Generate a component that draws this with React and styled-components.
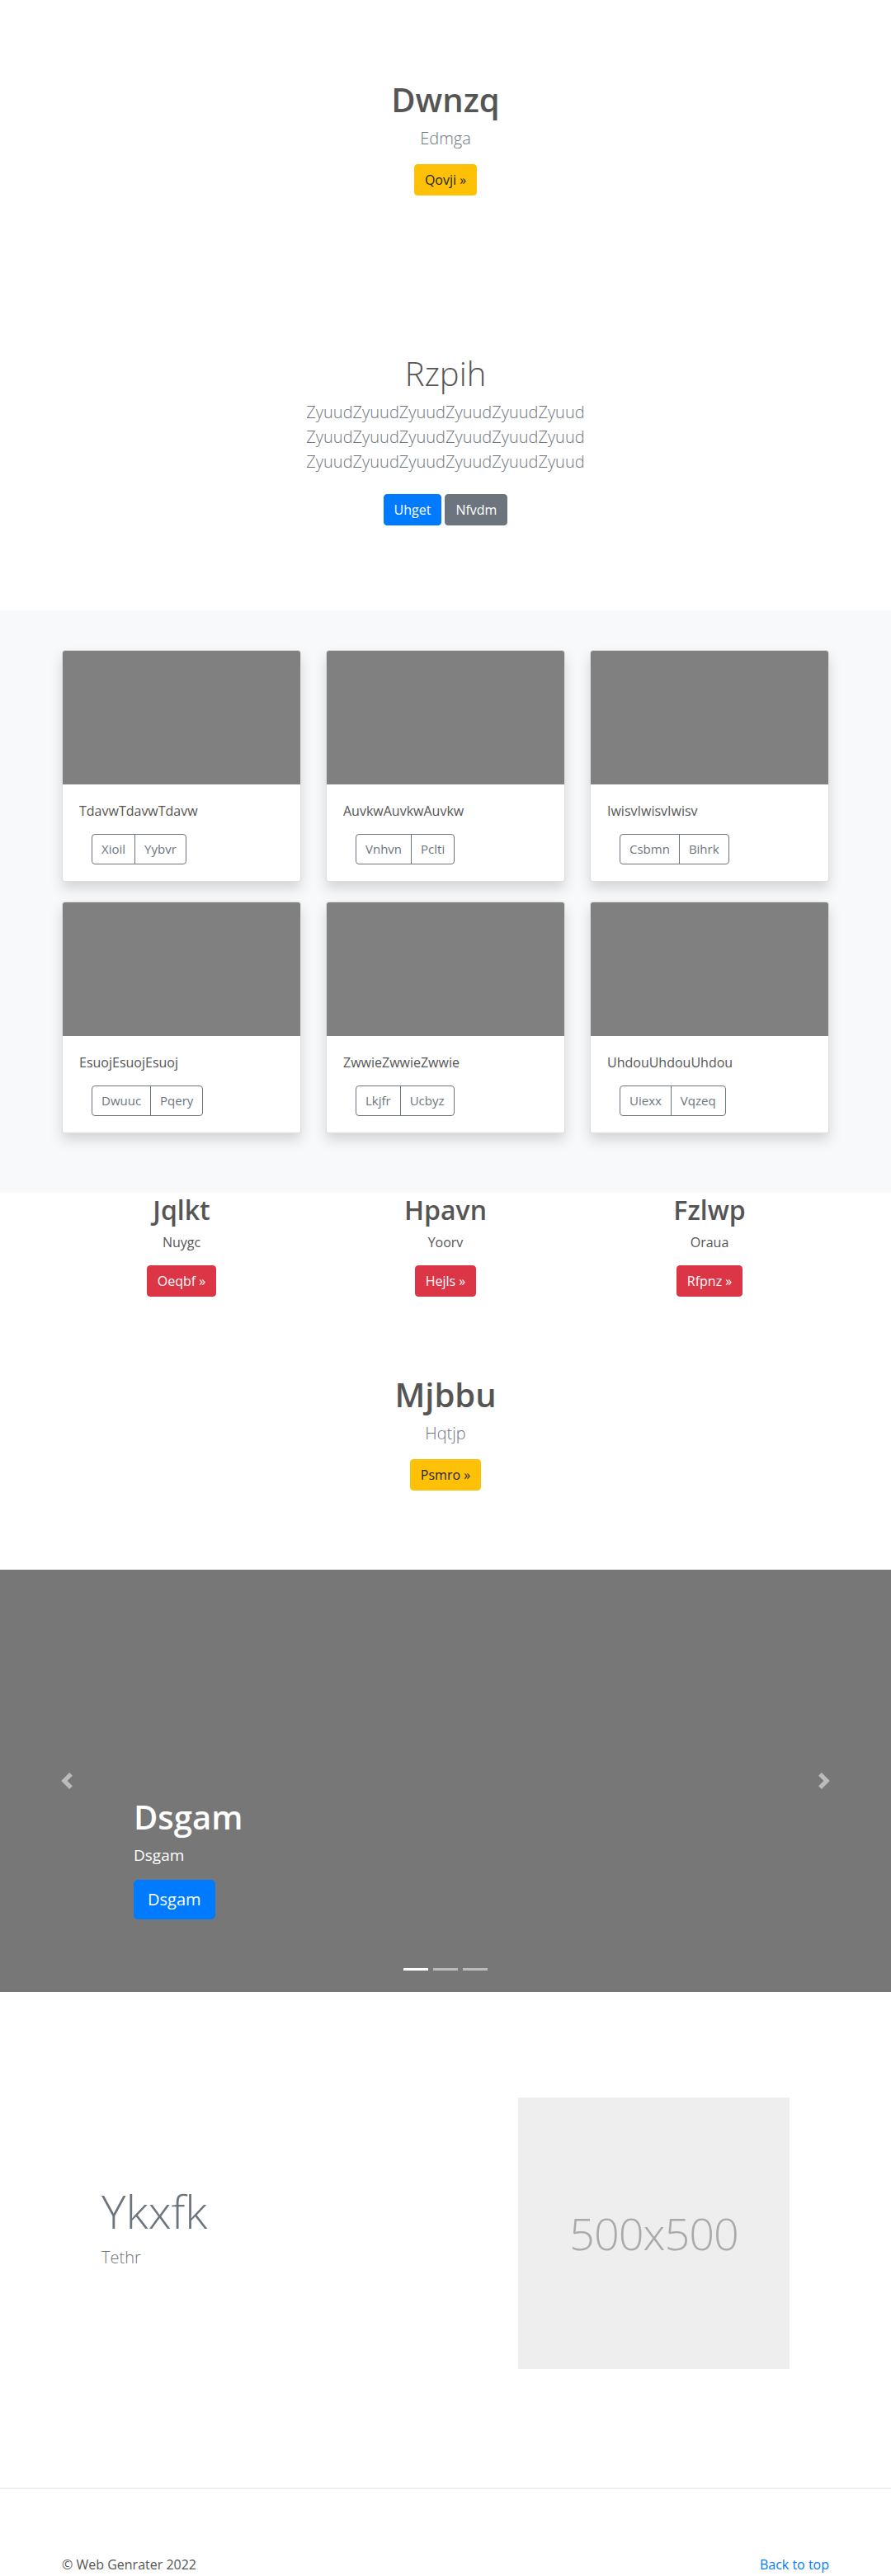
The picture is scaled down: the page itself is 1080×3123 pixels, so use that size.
import React from "react";
import styled, { createGlobalStyle } from "styled-components";

const GlobalStyle = createGlobalStyle`
  * { box-sizing: border-box; }
  body {
    margin: 0;
    font-family: "Segoe UI", "Open Sans", "Noto Sans", Arial, sans-serif;
    font-size: 16px;
    line-height: 1.5;
    color: #555;
    background: #fff;
  }
`;

const cards = [
  { text: "TdavwTdavwTdavw", buttons: ["Xioil", "Yybvr"] },
  { text: "AuvkwAuvkwAuvkw", buttons: ["Vnhvn", "Pclti"] },
  { text: "IwisvIwisvIwisv", buttons: ["Csbmn", "Bihrk"] },
  { text: "EsuojEsuojEsuoj", buttons: ["Dwuuc", "Pqery"] },
  { text: "ZwwieZwwieZwwie", buttons: ["Lkjfr", "Ucbyz"] },
  { text: "UhdouUhdouUhdou", buttons: ["Uiexx", "Vqzeq"] },
];

const columns = [
  { title: "Jqlkt", text: "Nuygc", button: "Oeqbf" },
  { title: "Hpavn", text: "Yoorv", button: "Hejls" },
  { title: "Fzlwp", text: "Oraua", button: "Rfpnz" },
];

const variants = {
  warning: { bg: "#ffc107", fg: "#212529" },
  primary: { bg: "#007bff", fg: "#fff" },
  secondary: { bg: "#6c757d", fg: "#fff" },
  danger: { bg: "#dc3545", fg: "#fff" },
};

export default function App() {
  return (
    <>
      <GlobalStyle />
      <Hero $top={97} $bottom={0}>
        <Title>Dwnzq</Title>
        <Lead>Edmga</Lead>
        <ButtonRow>
          <Btn $variant="warning">Qovji &raquo;</Btn>
        </ButtonRow>
      </Hero>

      <Hero $top={192} $bottom={103}>
        <Title $light>Rzpih</Title>
        <Lead $narrow $gap={24}>
          ZyuudZyuudZyuudZyuudZyuudZyuud ZyuudZyuudZyuudZyuudZyuudZyuud
          ZyuudZyuudZyuudZyuudZyuudZyuud
        </Lead>
        <ButtonRow>
          <Btn $variant="primary">Uhget</Btn>
          <Btn $variant="secondary">Nfvdm</Btn>
        </ButtonRow>
      </Hero>

      <Album>
        <Container>
          <CardGrid>
            {cards.map((card, index) => (
              <Card key={index}>
                <Thumb />
                <CardBody>
                  <CardText>{card.text}</CardText>
                  <BtnGroup>
                    {card.buttons.map((label) => (
                      <GroupBtn key={label}>{label}</GroupBtn>
                    ))}
                  </BtnGroup>
                </CardBody>
              </Card>
            ))}
          </CardGrid>
        </Container>
      </Album>

      <Marketing>
        <Container>
          <ColumnGrid>
            {columns.map((col) => (
              <Column key={col.title}>
                <ColumnTitle>{col.title}</ColumnTitle>
                <ColumnText>{col.text}</ColumnText>
                <Btn $variant="danger">{col.button} &raquo;</Btn>
              </Column>
            ))}
          </ColumnGrid>
        </Container>
      </Marketing>

      <Hero $top={95} $bottom={96}>
        <Title>Mjbbu</Title>
        <Lead>Hqtjp</Lead>
        <ButtonRow>
          <Btn $variant="warning">Psmro &raquo;</Btn>
        </ButtonRow>
      </Hero>

      <Carousel>
        <Control $side="left">
          <svg width="20" height="20" viewBox="0 0 8 8">
            <path fill="#fff" d="M5.25 0l-4 4 4 4 1.5-1.5L4.25 4l2.5-2.5L5.25 0z" />
          </svg>
        </Control>
        <Control $side="right">
          <svg width="20" height="20" viewBox="0 0 8 8">
            <path fill="#fff" d="M2.75 0l-1.5 1.5L3.75 4l-2.5 2.5L2.75 8l4-4-4-4z" />
          </svg>
        </Control>
        <Caption>
          <CaptionTitle>Dsgam</CaptionTitle>
          <CaptionText>Dsgam</CaptionText>
          <Btn $variant="primary" $large>Dsgam</Btn>
        </Caption>
        <Indicators>
          <Indicator $active />
          <Indicator />
          <Indicator />
        </Indicators>
      </Carousel>

      <Featurette>
        <Container>
          <FeatureRow>
            <div>
              <FeatureTitle>Ykxfk</FeatureTitle>
              <FeatureLead>Tethr</FeatureLead>
            </div>
            <Placeholder>500x500</Placeholder>
          </FeatureRow>
        </Container>
      </Featurette>

      <Divider />

      <Footer>
        <Container>
          <FooterRow>
            <span>&copy; Web Genrater 2022</span>
            <FooterLink href="#">Back to top</FooterLink>
          </FooterRow>
        </Container>
      </Footer>
    </>
  );
}

const Container = styled.div`
  width: 960px;
  max-width: 100%;
  margin: 0 auto;
  padding: 0 15px;
`;

const Hero = styled.section`
  text-align: center;
  padding: ${(p) => p.$top}px 15px ${(p) => p.$bottom}px;
`;

const Title = styled.h1`
  margin: 0 0 8px;
  font-size: 40px;
  line-height: 48px;
  font-weight: ${(p) => (p.$light ? 300 : 600)};
  color: #555;
`;

const Lead = styled.p`
  margin: 0 auto ${(p) => p.$gap ?? 16}px;
  max-width: ${(p) => (p.$narrow ? "450px" : "none")};
  font-size: 20px;
  line-height: 30px;
  font-weight: 300;
  color: #6c757d;
`;

const ButtonRow = styled.div`
  display: flex;
  justify-content: center;
  gap: 4px;
`;

const Btn = styled.a`
  display: inline-block;
  padding: ${(p) => (p.$large ? "8px 16px" : "6px 12px")};
  font-size: ${(p) => (p.$large ? "20px" : "16px")};
  line-height: ${(p) => (p.$large ? "30px" : "24px")};
  border-radius: ${(p) => (p.$large ? "5px" : "4px")};
  border: 1px solid ${(p) => variants[p.$variant].bg};
  background: ${(p) => variants[p.$variant].bg};
  color: ${(p) => variants[p.$variant].fg};
  text-decoration: none;
  cursor: pointer;
`;

const Album = styled.section`
  background: #f8f9fa;
  padding: 48px 0 72px;
`;

const CardGrid = styled.div`
  display: grid;
  grid-template-columns: repeat(3, 1fr);
  column-gap: 30px;
  row-gap: 24px;
`;

const Card = styled.div`
  background: #fff;
  border: 1px solid rgba(0, 0, 0, 0.125);
  border-radius: 4px;
  overflow: hidden;
  box-shadow: 0 8px 16px rgba(0, 0, 0, 0.15);
`;

const Thumb = styled.div`
  aspect-ratio: 16 / 9;
  background: #808080;
`;

const CardBody = styled.div`
  padding: 20px;
`;

const CardText = styled.p`
  margin: 0 0 16px;
  font-size: 16px;
  line-height: 24px;
  color: #555;
`;

const BtnGroup = styled.div`
  display: inline-flex;
  margin-left: 15px;
`;

const GroupBtn = styled.button`
  font-family: inherit;
  font-size: 15px;
  line-height: 21px;
  padding: 7px 11px;
  color: #6c757d;
  background: transparent;
  border: 1px solid #6c757d;
  border-radius: 0;
  cursor: pointer;
  &:first-child {
    border-radius: 4px 0 0 4px;
  }
  &:last-child {
    border-radius: 0 4px 4px 0;
  }
  & + & {
    margin-left: -1px;
  }
`;

const Marketing = styled.section`
  padding-top: 2px;
`;

const ColumnGrid = styled.div`
  display: grid;
  grid-template-columns: repeat(3, 1fr);
  column-gap: 30px;
`;

const Column = styled.div`
  text-align: center;
`;

const ColumnTitle = styled.h2`
  margin: 0 0 8px;
  font-size: 32px;
  line-height: 38px;
  font-weight: 600;
  color: #555;
`;

const ColumnText = styled.p`
  margin: 0 0 16px;
  color: #555;
`;

const Carousel = styled.section`
  position: relative;
  height: 512px;
  background: #777;
  margin-bottom: 64px;
`;

const Control = styled.a`
  position: absolute;
  top: 0;
  bottom: 0;
  ${(p) => p.$side}: 0;
  width: 15%;
  display: flex;
  align-items: center;
  justify-content: center;
  opacity: 0.5;
`;

const Caption = styled.div`
  position: absolute;
  left: 15%;
  right: 15%;
  bottom: 52px;
  padding: 20px 0 36px;
  color: #fff;
  text-align: left;
`;

const CaptionTitle = styled.h1`
  margin: 0 0 8px;
  font-size: 40px;
  line-height: 48px;
  font-weight: 600;
`;

const CaptionText = styled.p`
  margin: 0 0 16px;
  font-size: 19px;
  line-height: 28px;
`;

const Indicators = styled.div`
  position: absolute;
  left: 0;
  right: 0;
  bottom: 26px;
  display: flex;
  justify-content: center;
  gap: 6px;
`;

const Indicator = styled.span`
  width: 30px;
  height: 3px;
  background: #fff;
  opacity: ${(p) => (p.$active ? 1 : 0.5)};
`;

const Featurette = styled.section`
  padding-top: 64px;
`;

const FeatureRow = styled.div`
  display: grid;
  grid-template-columns: 1fr 1fr;
  align-items: center;
  padding: 0 48px;
`;

const FeatureTitle = styled.h2`
  margin: 0 0 8px;
  font-size: 56px;
  line-height: 67px;
  font-weight: 300;
  color: #6c757d;
`;

const FeatureLead = styled.p`
  margin: 0 0 16px;
  font-size: 20px;
  line-height: 30px;
  font-weight: 300;
  color: #6c757d;
`;

const Placeholder = styled.div`
  justify-self: end;
  width: 329px;
  height: 329px;
  background: #eee;
  color: #aaa;
  display: flex;
  align-items: center;
  justify-content: center;
  font-size: 54px;
  font-weight: 300;
  letter-spacing: -1px;
`;

const Divider = styled.hr`
  margin: 144px 0 80px;
  border: 0;
  border-top: 1px solid rgba(0, 0, 0, 0.1);
`;

const Footer = styled.footer`
  padding-bottom: 16px;
`;

const FooterRow = styled.div`
  display: flex;
  justify-content: space-between;
  align-items: center;
`;

const FooterLink = styled.a`
  color: #007bff;
  text-decoration: none;
`;
